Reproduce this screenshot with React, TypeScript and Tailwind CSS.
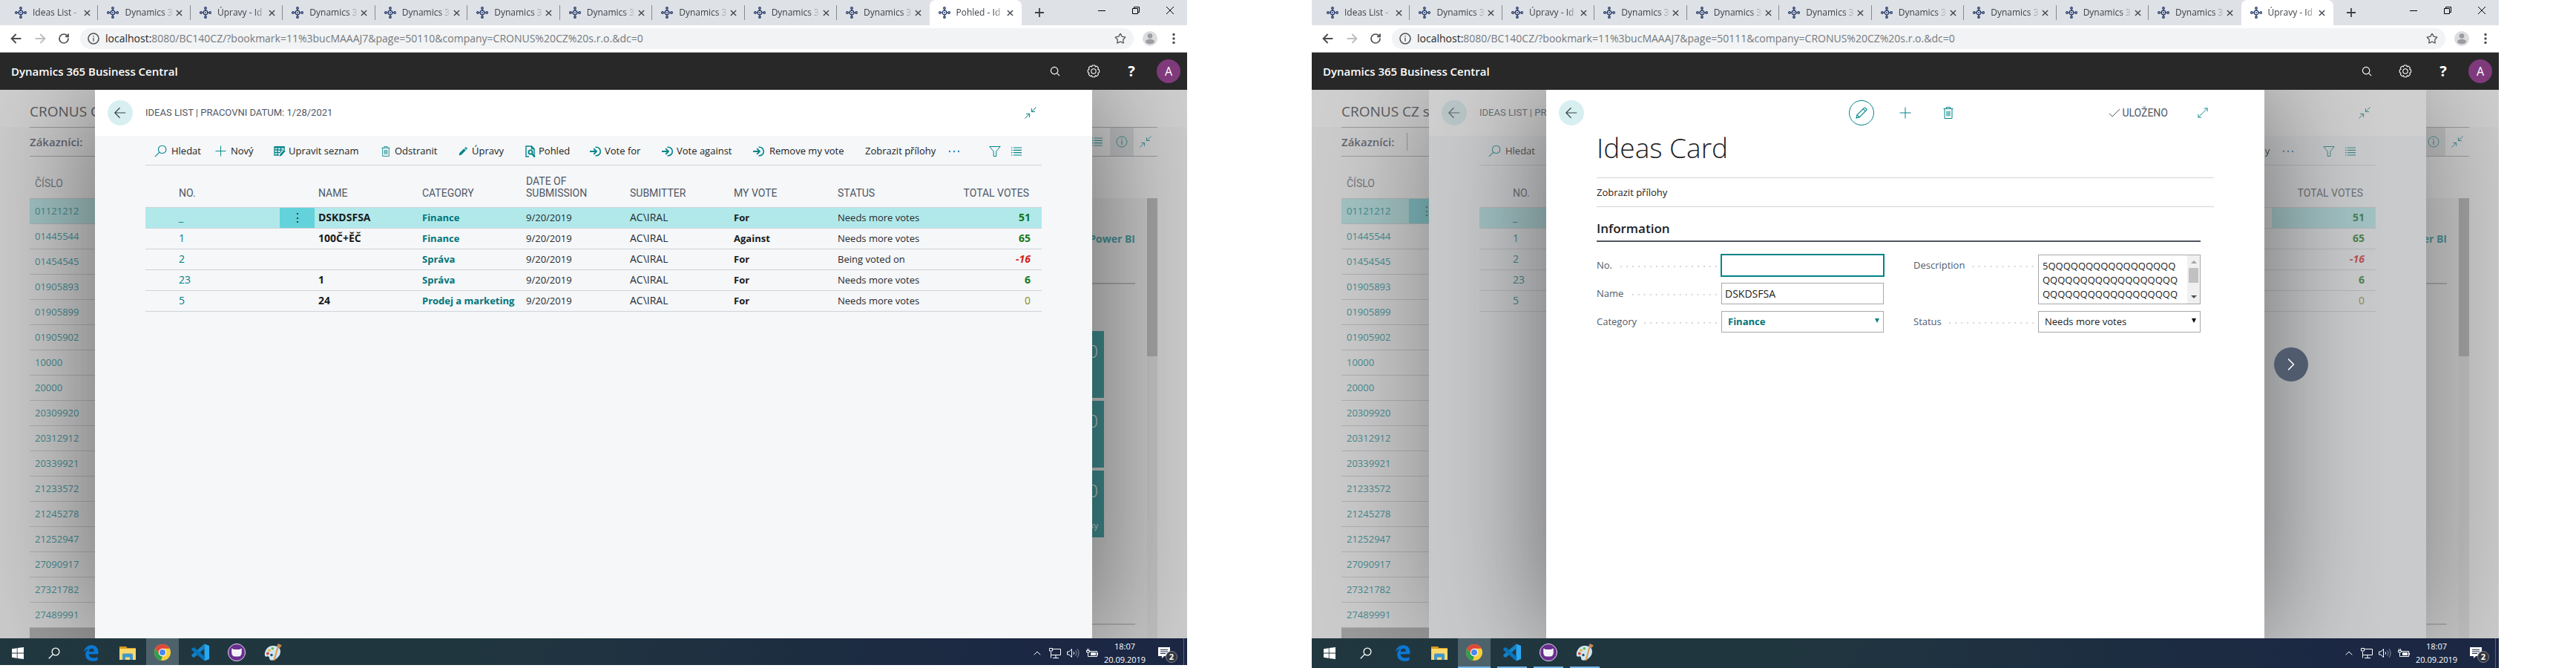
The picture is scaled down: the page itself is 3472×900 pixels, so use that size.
import React from "react";
import { ChevronRight, ChevronUp, RotateCw, Star } from "lucide-react";

type IconProps = { className?: string };

const UI_FONT = "font-['Open_Sans','Noto_Sans',sans-serif]";
const CAPTION_FONT = "font-['Roboto','Noto_Sans',sans-serif]";

/* ---------- icons ---------- */

function Favicon({ className = "" }: IconProps) {
  return (
    <svg viewBox="0 0 16 16" className={className} fill="none" stroke="#1c3263" strokeWidth="1.2" aria-hidden="true">
      <circle cx="8" cy="8" r="2.8" />
      <circle cx="8" cy="8" r="0.9" fill="#1c3263" stroke="none" />
      <circle cx="8" cy="1.900" r="1.300" />
      <circle cx="8" cy="14.100" r="1.300" />
      <circle cx="1.900" cy="8" r="1.300" />
      <circle cx="14.100" cy="8" r="1.300" />
      <path d="M8 3.200v2M8 10.800v2M3.200 8h2M10.800 8h2" />
    </svg>
  );
}

function Arrow({ className = "" }: IconProps) {
  return (
    <svg viewBox="0 0 20 20" className={className} fill="none" stroke="currentColor" aria-hidden="true">
      <path d="M18 10H2.5M9.5 2.5 2 10l7.5 7.5" />
    </svg>
  );
}

function MagnifierLeft({ className = "" }: IconProps) {
  return (
    <svg viewBox="0 0 16 16" className={className} fill="none" stroke="currentColor" aria-hidden="true">
      <circle cx="10" cy="6" r="4.9" />
      <path d="M6.4 9.6 0.8 15.2" />
    </svg>
  );
}

function Magnifier({ className = "" }: IconProps) {
  return (
    <svg viewBox="0 0 16 16" className={className} fill="none" stroke="currentColor" strokeWidth="1.3" aria-hidden="true">
      <circle cx="7" cy="7" r="5.4" />
      <path d="m11 11 4 4" />
    </svg>
  );
}

function PlusIcon({ className = "" }: IconProps) {
  return (
    <svg viewBox="0 0 16 16" className={className} fill="none" stroke="currentColor" aria-hidden="true">
      <path d="M8 0.5v15M0.5 8h15" />
    </svg>
  );
}

function EditListIcon({ className = "" }: IconProps) {
  return (
    <svg viewBox="0 0 16 16" className={className} fill="none" stroke="currentColor" aria-hidden="true">
      <path d="M1 2h13v4M1 2v11h6M1 6h11M1 9.5h8M5 2v11M9.5 2v7" strokeWidth="1.3" />
      <path d="M0.5 1.2h14v2.3h-14z" fill="currentColor" stroke="none" />
      <path d="m7.5 14.8.8-2.8 5.6-6.2 1.8 1.6-5.6 6.4z" fill="currentColor" stroke="none" />
    </svg>
  );
}

function TrashIcon({ className = "" }: IconProps) {
  return (
    <svg viewBox="0 0 14 16" className={className} fill="none" stroke="currentColor" aria-hidden="true">
      <path d="M0.5 2.5h13M4.5 2.5v-2h5v2M2 2.5v13h10v-13M5 5.5v7M7 5.5v7M9 5.5v7" />
    </svg>
  );
}

function PencilSolid({ className = "" }: IconProps) {
  return (
    <svg viewBox="0 0 12 12" className={className} fill="currentColor" aria-hidden="true">
      <path d="M0.6 11.4 1.5 8 7.4 2.2 9.8 4.6 3.9 10.4zM8.2 1.4l.9-.9a.9.9 0 0 1 1.2 0l1.2 1.2a.9.9 0 0 1 0 1.2l-.9.9z" />
    </svg>
  );
}

function PencilOutline({ className = "" }: IconProps) {
  return (
    <svg viewBox="0 0 16 16" className={className} fill="none" stroke="currentColor" strokeWidth="1.1" aria-hidden="true">
      <path d="M1 15 2 10.8 11.6 1.3a1 1 0 0 1 1.4 0l1.7 1.7a1 1 0 0 1 0 1.4L5.2 14zM2 10.8 5.2 14M10.2 2.7l3.1 3.1" />
    </svg>
  );
}

function ViewDocIcon({ className = "" }: IconProps) {
  return (
    <svg viewBox="0 0 14 16" className={className} fill="none" stroke="currentColor" strokeWidth="1.4" aria-hidden="true">
      <path d="M5 15H1V1h7.5L12 4.5V15h-1M8.5 1v3.5H12" />
      <circle cx="7" cy="9" r="2.6" strokeWidth="1.8" />
      <path d="m8.8 11 4 4.5" strokeWidth="2" />
    </svg>
  );
}

function VoteIcon({ className = "" }: IconProps) {
  return (
    <svg viewBox="0 0 16 16" className={className} fill="none" stroke="currentColor" strokeWidth="1.8" aria-hidden="true">
      <path d="M0 8h8.500M5.200 4.200 9 8l-3.800 3.800" />
      <path d="M7.500 2.200h1a5.800 5.800 0 0 1 0 11.600h-1" strokeWidth="1.6" />
    </svg>
  );
}

function FunnelIcon({ className = "" }: IconProps) {
  return (
    <svg viewBox="0 0 16 14" className={className} fill="none" stroke="currentColor" aria-hidden="true">
      <path d="M0.8 0.5h14.4L9.8 7v6.5H6.2V7z" />
    </svg>
  );
}

function ListIcon({ className = "" }: IconProps) {
  return (
    <svg viewBox="0 0 14 12" className={className} fill="none" stroke="currentColor" strokeWidth="1.2" aria-hidden="true">
      <path d="M0 1h1.6M3 1h11M0 4.3h1.6M3 4.3h11M0 7.6h1.6M3 7.6h11M0 11h1.6M3 11h11" />
    </svg>
  );
}

function CollapseIcon({ className = "" }: IconProps) {
  return (
    <svg viewBox="0 0 16 16" className={className} fill="none" stroke="currentColor" aria-hidden="true">
      <path d="M15.6.4 9.4 6.6M9.4 2v4.6H14M.4 15.6l6.2-6.2M2 9.4h4.6V14" />
    </svg>
  );
}

function ExpandIcon({ className = "" }: IconProps) {
  return (
    <svg viewBox="0 0 16 16" className={className} fill="none" stroke="currentColor" aria-hidden="true">
      <path d="M1 15 15 1M10 1h5v5M1 10v5h5" />
    </svg>
  );
}

function InfoIcon({ className = "" }: IconProps) {
  return (
    <svg viewBox="0 0 16 16" className={className} fill="none" stroke="currentColor" aria-hidden="true">
      <circle cx="8" cy="8" r="7" />
      <path d="M8 6.800v5M8 4v1.400" strokeWidth="1.3" />
    </svg>
  );
}

function GearIcon({ className = "" }: IconProps) {
  return (
    <svg viewBox="0 0 18 18" className={className} fill="none" stroke="currentColor" strokeWidth="1.1" aria-hidden="true">
      <path
        strokeLinejoin="round"
        d="M7.300 1h3.400l.6 1.900 1.900-.8 2.300 2.300-.8 1.900 1.900.9v3.400l-1.900.8.8 2-2.300 2.300-1.900-.9-.6 2H7.300l-.8-2-1.900.9-2.300-2.300.8-2L1.300 10.600V7.200l1.800-.9-.8-1.900 2.300-2.300 1.900.8z"
      />
      <circle cx="9" cy="9" r="3.200" />
    </svg>
  );
}

/* ---------- browser chrome ---------- */

function Tab({ title, active, divider }: { title: string; active: boolean; divider: boolean }) {
  return (
    <div
      className={
        "flex h-[34px] min-w-0 flex-1 items-center pl-3 pr-2 " + (active ? "rounded-t-lg bg-white" : "bg-[#dee1e6]")
      }
    >
      <Favicon className="size-4 shrink-0" />
      <span className="ml-2 min-w-0 flex-1 overflow-hidden whitespace-nowrap text-xs text-[#3f4347] [mask-image:linear-gradient(to_right,#000_78%,transparent)]">
        {title}
      </span>
      <button aria-label="Close tab" className="flex h-5 w-4 shrink-0 items-center justify-center">
        <svg viewBox="0 0 10 10" className="size-[9px]" stroke="#45494d" strokeWidth="1.6">
          <path d="m1 1 8 8M9 1 1 9" />
        </svg>
      </button>
      <span className={"-mr-2 ml-1.5 h-5 w-px shrink-0 " + (divider ? "bg-[#868b90]" : "")} />
    </div>
  );
}

function BrowserChrome({ lastTab, pageId }: { lastTab: string; pageId: string }) {
  const dyn = "Dynamics 3";
  const titles = ["Ideas List -", dyn, "Úpravy - Id", dyn, dyn, dyn, dyn, dyn, dyn, dyn, lastTab];
  return (
    <header className="shrink-0">
      <div className="flex h-[34px] bg-[#dee1e6] pl-2">
        {titles.map((t, i) => (
          <Tab key={i} title={t} active={i === titles.length - 1} divider={i < titles.length - 2} />
        ))}
        <div className="flex w-[223px] shrink-0 items-center">
          <button aria-label="New tab" className="ml-3.5 flex size-5 items-center justify-center">
            <svg viewBox="0 0 12 12" className="size-3" stroke="#3c4043" strokeWidth="1.8">
              <path d="M6 0v12M0 6h12" />
            </svg>
          </button>
          <div className="ml-auto flex h-7 items-center gap-9 self-start pr-[18px] text-black">
            <svg viewBox="0 0 10 10" className="size-2.5" stroke="currentColor">
              <path d="M0 5.5h10" />
            </svg>
            <svg viewBox="0 0 10 10" className="size-2.5" fill="none" stroke="currentColor">
              <path d="M.5 2.500h7v7h-7zM2.500 2.500v-2h7v7h-2" />
            </svg>
            <svg viewBox="0 0 10 10" className="size-2.5" stroke="currentColor">
              <path d="m0 0 10 10M10 0 0 10" />
            </svg>
          </div>
        </div>
      </div>
      <div className="flex h-[37px] items-center border-b border-[#b0b6b5] bg-white pr-4">
        <div className="flex w-[108px] shrink-0 items-center gap-4 pl-3.5">
          <Arrow className="size-4 text-[#4a4d51] [stroke-width:2.4]" />
          <Arrow className="size-4 rotate-180 text-[#bcbec1] [stroke-width:2.4]" />
          <RotateCw className="size-4 text-[#4a4d51]" strokeWidth={2.6} />
        </div>
        <div className="flex h-7 min-w-0 flex-1 items-center rounded-full bg-[#f1f3f4] px-2.5">
          <InfoIcon className="size-4 text-[#4f5357] [stroke-width:1.6]" />
          <span className="ml-2 flex-1 truncate text-sm text-[#75797e]">
            <span className="text-[#26282b]">localhost:</span>8080/BC140CZ/?bookmark=11%3bucMAAAJ7&amp;page={pageId}
            &amp;company=CRONUS%20CZ%20s.r.o.&amp;dc=0
          </span>
          <Star className="size-4 text-[#55595e]" strokeWidth={2} />
        </div>
        <svg viewBox="0 0 20 20" className="ml-3 size-5" aria-hidden="true">
          <circle cx="10" cy="10" r="10" fill="#dadcde" />
          <circle cx="10" cy="6.500" r="3.300" fill="#9b9da0" />
          <ellipse cx="10" cy="14" rx="6" ry="3.200" fill="#9b9da0" />
        </svg>
        <svg viewBox="0 0 4 16" className="ml-5 h-4 w-1" fill="#4a4d51" aria-hidden="true">
          <circle cx="2" cy="2.500" r="1.700" />
          <circle cx="2" cy="8" r="1.700" />
          <circle cx="2" cy="13.500" r="1.700" />
        </svg>
      </div>
    </header>
  );
}

function AppBar() {
  return (
    <div className="flex h-[50px] shrink-0 items-center bg-[#282828] pl-[15px] pr-[9px] text-white">
      <span className="text-[15px] font-semibold">Dynamics 365 Business Central</span>
      <div className="ml-auto flex items-center">
        <Magnifier className="size-3.5" />
        <GearIcon className="ml-9 size-[18px]" />
        <span className="ml-9 w-3 text-center text-xl leading-none font-bold">?</span>
        <span className="ml-7 flex size-8 items-center justify-center rounded-full bg-[#7f3a7c] text-base">A</span>
      </div>
    </div>
  );
}

/* ---------- customers page behind the dialogs ---------- */

const customers = [
  "01121212", "01445544", "01454545", "01905893", "01905899", "01905902", "10000", "20000", "20309920",
  "20312912", "20339921", "21233572", "21245278", "21252947", "27090917", "27321782", "27489991",
];

function CustomersPage() {
  return (
    <div className="flex h-full flex-col bg-[#f8f8fa] bg-[linear-gradient(white,white)] bg-[length:100%_50px] bg-no-repeat px-10 text-[#2c3038]">
      <div className="flex h-[51px] shrink-0 items-center border-b border-[#9d9fa5] pt-2 text-[19px]">CRONUS CZ s.r.o.</div>
      <div className="flex h-[39px] shrink-0 items-center border-b border-[#9d9fa5]">
        <span className="text-[15px] font-semibold text-[#42464f]">Zákazníci:</span>
        <span className="ml-[17px] h-6 w-px bg-[#9d9fa5]" />
        <span className="ml-auto flex h-full items-center text-[#008489]">
          <ListIcon className="mr-2.5 h-3 w-3.5" />
          <span className="flex h-full w-8 items-center justify-center bg-[#d9dadc]">
            <InfoIcon className="size-4" />
          </span>
          <CollapseIcon className="mr-2 ml-2 size-4" />
        </span>
      </div>
      <div className="flex min-h-0 flex-1 overflow-hidden">
        <div className="flex min-w-0 flex-1 flex-col">
          <table className="w-full table-fixed border-collapse text-left text-[13px]">
            <thead>
              <tr className="h-14">
                <th className={"w-[91px] pt-4 pl-[7px] text-sm font-normal text-[#5a6069] " + CAPTION_FONT}>ČÍSLO</th>
                <th className="w-12" />
                <th />
              </tr>
            </thead>
            <tbody>
              {customers.map((id, i) => (
                <tr
                  key={id}
                  className={"h-[34px] border-y border-[#c5c7cb] text-[#008489] " + (i === 0 ? "bg-[#aee9ea]" : "")}
                >
                  <td className="pt-0.5 pl-[7px]">{id}</td>
                  <td className={"text-center text-base text-[#204040] " + (i === 0 ? "bg-[#64d2da]" : "")}>
                    {i === 0 ? "⋮" : ""}
                  </td>
                  <td />
                </tr>
              ))}
            </tbody>
          </table>
          <div className="flex-1 bg-[#a2a2a2]" />
        </div>
        <div className="mt-14 flex w-[330px] shrink-0 bg-[#ececec]">
          <div className="flex flex-1 flex-col items-end pr-4">
            <div className="flex h-[116px] w-full items-center justify-end border-b-2 border-[#acacac] text-sm font-bold text-[#008489]">
              <span className="pb-1">Power BI</span>
            </div>
            <div className="mt-[63px] mr-[42px] flex flex-col gap-1">
              {["", "", "Dlužníky"].map((caption, i) => (
                <div key={i} className="flex h-[90px] w-[90px] flex-col items-end bg-[#008489] pr-2 text-white">
                  <span className="text-2xl leading-[54px] font-light">0</span>
                  <span className="mt-3 text-[11px] leading-4">{caption}</span>
                </div>
              ))}
            </div>
            <div className="mt-[116px] h-0.5 w-full bg-[#b5b5b5]" />
          </div>
          <div className="w-3.5 bg-[#e3e3e3]">
            <div className="h-[213px] bg-[#acacac]" />
          </div>
        </div>
      </div>
    </div>
  );
}

/* ---------- ideas list ---------- */

type Idea = { no: string; name: string; category: string; vote: string; status: string; total: string; tone: string };

const ideas: Idea[] = [
  { no: "_", name: "DSKDSFSA", category: "Finance", vote: "For", status: "Needs more votes", total: "51", tone: "font-bold text-[#107420]" },
  { no: "1", name: "100Č+ĚČ", category: "Finance", vote: "Against", status: "Needs more votes", total: "65", tone: "font-bold text-[#187a18]" },
  { no: "2", name: "", category: "Správa", vote: "For", status: "Being voted on", total: "-16", tone: "font-bold italic text-[#d6201f]" },
  { no: "23", name: "1", category: "Správa", vote: "For", status: "Needs more votes", total: "6", tone: "font-bold text-[#187a18]" },
  { no: "5", name: "24", category: "Prodej a marketing", vote: "For", status: "Needs more votes", total: "0", tone: "text-[#8a8a14]" },
];

const headings = ["NAME", "CATEGORY", "DATE OF SUBMISSION", "SUBMITTER", "MY VOTE", "STATUS"];

function Action({ icon, label, className }: { icon?: React.ReactNode; label: string; className: string }) {
  return (
    <button className={"flex shrink-0 items-center whitespace-nowrap " + className}>
      {icon}
      {label}
    </button>
  );
}

function BackButton() {
  return (
    <button aria-label="Back" className="flex size-[34px] shrink-0 items-center justify-center rounded-full bg-[#d8eff1] text-[#33434a]">
      <Arrow className="size-[18px] [stroke-width:1.3]" />
    </button>
  );
}

/* With `covered` set, the middle of the list lies under another dialog and is not painted. */
function IdeasList({ covered = false }: { covered?: boolean }) {
  const teal = "text-[#008489] shrink-0 ";
  const mid = covered ? "invisible " : "";
  return (
    <div className="flex h-full flex-col bg-[#f5f7f9]">
      <div className="flex h-[62px] shrink-0 items-center bg-white pr-[75px] pl-[17px]">
        <BackButton />
        <h2 className={"ml-[17px] text-[13px] text-[#505866] " + CAPTION_FONT}>IDEAS LIST | PRACOVNI DATUM: 1/28/2021</h2>
        <button aria-label="Collapse" className="ml-auto text-[#008489]">
          <CollapseIcon className="size-4" />
        </button>
      </div>
      <div className="mr-17 ml-17 flex h-10 shrink-0 items-center border-b border-[#cfd3d7] pt-0.5 pl-3 text-[13px] text-[#212121]">
        <Action className="w-[82px] gap-1.5" icon={<MagnifierLeft className={teal + "size-[17px]"} />} label="Hledat" />
        <Action className={mid + "w-[79px] gap-1.5"} icon={<PlusIcon className={teal + "size-[15px]"} />} label="Nový" />
        <Action className={mid + "w-[145px] gap-1"} icon={<EditListIcon className={teal + "size-4"} />} label="Upravit seznam" />
        <Action className={mid + "w-[104px] gap-1.5"} icon={<TrashIcon className={teal + "h-4 w-3"} />} label="Odstranit" />
        <Action className={mid + "w-[90px] gap-1.5"} icon={<PencilSolid className={teal + "size-3"} />} label="Úpravy" />
        <Action className={mid + "w-[87px] gap-1"} icon={<ViewDocIcon className={teal + "h-4 w-3.5"} />} label="Pohled" />
        <Action className={mid + "w-[97px] gap-1"} icon={<VoteIcon className={teal + "size-4"} />} label="Vote for" />
        <Action className={mid + "w-[123px] gap-1"} icon={<VoteIcon className={teal + "size-4"} />} label="Vote against" />
        <Action className={mid + "w-[151px] gap-1.5"} icon={<VoteIcon className={teal + "size-4"} />} label="Remove my vote" />
        <Action className="w-[112px]" label="Zobrazit přílohy" />
        <button aria-label="More" className="shrink-0 text-[#2b88c8]">
          <svg viewBox="0 0 16 4" className="h-1 w-4" fill="currentColor">
            <circle cx="2" cy="2" r="1.200" />
            <circle cx="8" cy="2" r="1.200" />
            <circle cx="14" cy="2" r="1.200" />
          </svg>
        </button>
        <button aria-label="Filter" className="ml-auto shrink-0">
          <FunnelIcon className={teal + "h-3.5 w-4"} />
        </button>
        <button aria-label="List view" className="mr-[27px] ml-3.5 shrink-0">
          <ListIcon className={teal + "h-3 w-3.5"} />
        </button>
      </div>
      <div className="mx-17">
        <table className="w-full table-fixed border-collapse text-left text-[13px] text-[#26292d]">
          <thead>
            <tr className={"h-14 align-bottom text-sm leading-4 text-[#505866] " + CAPTION_FONT}>
              <th className="pb-[11px] pl-[45px] font-normal">NO.</th>
              <th className="w-[47px]" />
              {headings.map((h) => (
                <th key={h} className={mid + "w-[140px] pb-[11px] pl-[5px] font-normal"}>
                  {h}
                </th>
              ))}
              <th className="w-[140px] pr-[17px] pb-[11px] text-right font-normal">TOTAL VOTES</th>
            </tr>
          </thead>
          <tbody>
            {ideas.map((r, i) => (
              <tr key={r.no} className={"h-7 border-y border-[#cfd3d7] whitespace-nowrap " + (i === 0 ? "bg-[#b1e9eb]" : "")}>
                <td className="pl-[45px] text-sm leading-5 text-[#007f85]">{r.no}</td>
                <td className={mid + "text-center text-base leading-5 " + (i === 0 ? "bg-[#64d2da]" : "")}>{i === 0 ? "⋮" : ""}</td>
                <td className={mid + "pl-[5px] text-sm leading-5 font-bold text-[#1a1a1a]"}>{r.name}</td>
                <td className={mid + "pl-[5px] leading-5 font-bold text-[#00757a]"}>{r.category}</td>
                <td className={mid + "pl-[5px] leading-5"}>9/20/2019</td>
                <td className={mid + "pl-[5px] text-sm leading-5"}>AC\IRAL</td>
                <td className={mid + "pl-[5px] leading-5 font-bold text-[#1a1a1a]"}>{r.vote}</td>
                <td className={mid + "pl-[5px] leading-5"}>{r.status}</td>
                <td className={"pr-[15px] text-right text-sm leading-5 " + r.tone}>{r.total}</td>
              </tr>
            ))}
          </tbody>
        </table>
      </div>
    </div>
  );
}

/* ---------- ideas card ---------- */

function Leader() {
  return (
    <span className="mt-0.5 mr-1.5 ml-2.5 h-0.5 flex-1 bg-[linear-gradient(to_left,#d3d6d9_2px,transparent_2px)] bg-[length:8px_2px] bg-right" />
  );
}

function Field({ id, label, children }: { id: string; label: string; children: React.ReactNode }) {
  return (
    <div className="flex items-start">
      <label htmlFor={id} className="flex h-[29px] w-[168px] shrink-0 items-center text-[13px] text-[#505c6d]">
        {label}
        <Leader />
      </label>
      {children}
    </div>
  );
}

function Caret({ className = "" }: IconProps) {
  return (
    <svg viewBox="0 0 6 6" className={"pointer-events-none absolute top-2.5 right-1.5 size-1.5 " + className} fill="currentColor" aria-hidden="true">
      <path d="M0 0h6L3 6z" />
    </svg>
  );
}

const box = "h-[29px] w-full min-w-0 border bg-white ";

function IdeasCard() {
  const q = "Q".repeat(17);
  return (
    <div className="flex h-full flex-col bg-white">
      <div className="flex h-[62px] shrink-0 items-center pr-[76px] pl-[17px] text-[#008489]">
        <BackButton />
        <button aria-label="Edit" className="ml-[357px] flex size-[34px] items-center justify-center rounded-full border border-[#008489]">
          <PencilOutline className="size-4" />
        </button>
        <button aria-label="New" className="ml-[34px]">
          <PlusIcon className="size-4" />
        </button>
        <button aria-label="Delete" className="ml-[43px]">
          <TrashIcon className="h-4 w-3.5" />
        </button>
        <span className={"ml-auto flex items-center gap-0.5 text-sm text-[#505866] " + CAPTION_FONT}>
          <svg viewBox="0 0 16 12" className="h-3 w-4" fill="none" stroke="currentColor">
            <path d="m1 7 4 4L15 1" />
          </svg>
          ULOŽENO
        </span>
        <button aria-label="Expand" className="ml-10">
          <ExpandIcon className="size-3.5" />
        </button>
      </div>
      <div className="px-17">
        <h1 className="h-14 text-[37px] leading-8 font-light text-[#212121]">Ideas Card</h1>
        <div className="flex h-10 items-center border-y border-[#d2d4d6] text-[13px] text-[#212121]">
          <button className="pt-px">Zobrazit přílohy</button>
        </div>
        <section className="mr-[18px]">
          <h2 className="flex h-[47px] items-end border-b-2 border-[#50565f] pb-1 text-[17px] font-semibold text-[#212121]">
            Information
          </h2>
          <div className="mt-[17px] grid grid-cols-2 gap-x-10">
            <div className="flex flex-col gap-[9px]">
              <Field id="no" label="No.">
                <input id="no" className={box + "border-[#008489] px-1.5 text-sm outline outline-[#008489]"} />
              </Field>
              <Field id="name" label="Name">
                <input id="name" defaultValue="DSKDSFSA" className={box + "border-[#a6a8ab] px-1 text-sm text-[#212121]"} />
              </Field>
              <Field id="category" label="Category">
                <span className="relative flex-1">
                  <select id="category" className={box + "appearance-none border-[#a6a8ab] px-2 text-[13px] font-bold text-[#00757a]"}>
                    <option>Finance</option>
                  </select>
                  <Caret className="text-[#008489]" />
                </span>
              </Field>
            </div>
            <div className="flex flex-col gap-[9px]">
              <Field id="description" label="Description">
                <span className="flex h-[67px] min-w-0 flex-1 border border-[#a6a8ab]">
                  <textarea
                    id="description"
                    wrap="off"
                    defaultValue={`5${q}\nQ${q}\nQ${q}`}
                    className="h-full min-w-0 flex-1 resize-none overflow-hidden bg-transparent pt-[5px] pl-[5px] text-[13px] leading-[19px] text-[#212121] outline-none"
                  />
                  <span className="flex w-[17px] flex-col items-center bg-[#f0f0f0] py-[7px] text-[#505050]">
                    <svg viewBox="0 0 8 4" className="h-1 w-2" fill="#a3a3a3">
                      <path d="M0 4h8L4 0z" />
                    </svg>
                    <span className="mt-1.5 h-5 w-[13px] bg-[#c1c1c1]" />
                    <svg viewBox="0 0 8 4" className="mt-auto h-1 w-2" fill="currentColor">
                      <path d="M0 0h8L4 4z" />
                    </svg>
                  </span>
                </span>
              </Field>
              <Field id="status" label="Status">
                <span className="relative flex-1">
                  <select id="status" className={box + "appearance-none border-[#a6a8ab] px-2 text-[13px] text-[#212121]"}>
                    <option>Needs more votes</option>
                  </select>
                  <Caret className="text-black" />
                </span>
              </Field>
            </div>
          </div>
        </section>
      </div>
    </div>
  );
}

/* ---------- taskbar ---------- */

function Taskbar({ windowsOpen }: { windowsOpen: boolean }) {
  const mark = windowsOpen ? "border-b-2 border-[#76b9ed] " : "border-b-2 border-transparent ";
  const app = "mr-1 ml-[5px] flex h-10 w-10 items-center justify-center " + mark;
  return (
    <footer className="flex h-10 shrink-0 items-center bg-[linear-gradient(to_right,#21373f,#20363f_40%,#1b2743_88%)] text-white">
      <button aria-label="Start" className="flex w-12 justify-center">
        <svg viewBox="0 0 16 16" className="size-4" fill="#fff">
          <path d="M0 2.200 6.800 1.200v6.400H0zM7.600 1.100 16 0v7.600H7.600zM0 8.400h6.800v6.400L0 13.800zM7.600 8.400H16V16l-8.400-1.100z" />
        </svg>
      </button>
      <button aria-label="Search" className="flex w-[50px] justify-center">
        <MagnifierLeft className="size-4 [stroke-width:1.3]" />
      </button>
      <button aria-label="Edge" className="flex w-[49px] justify-center">
        <svg viewBox="0 0 20 22" className="h-[22px] w-5" fill="#0b78d4">
          <path d="M0 9.500C1 3.500 5.500.2 10.500.2c5.700 0 9 4 9 9.400v2.600H6.600c.2 3.700 3 5.300 6.200 5.300 2.200 0 4-.6 5.700-1.600v4.300c-1.900 1-4.200 1.500-6.600 1.500-5.800 0-9.700-3.400-9.700-8.900 0-3.400 1.700-6.300 4.700-7.600C3.800 5.800 1.500 7.200 0 9.500zM6.700 8.900h7.200c0-2.600-1.300-4.100-3.500-4.100-2.100 0-3.400 1.600-3.700 4.100z" />
        </svg>
      </button>
      <button aria-label="Explorer" className="flex w-[49px] justify-center">
        <svg viewBox="0 0 22 18" className="h-[18px] w-[22px]">
          <path d="M0 0h9l1.500 2H22v3H0z" fill="#d99a1c" />
          <path d="M0 3h22v15H0z" fill="#fbd86b" />
          <path d="M4 18V11a1.500 1.500 0 0 1 1.500-1.500h11A1.500 1.500 0 0 1 18 11v7h-4v-3.500H8V18z" fill="#3f97cf" />
        </svg>
      </button>
      <button
        aria-label="Chrome"
        className={"ml-px mr-1 flex h-10 w-11 items-center justify-center bg-[#4e626b] " + mark}
      >
        <svg viewBox="0 0 22 22" className="size-[22px]">
          <circle cx="11" cy="11" r="11" fill="#f9cf3e" />
          <path d="M11 0a11 11 0 0 1 9.600 5.700H11L6.400 13.700 1.600 5.400A11 11 0 0 1 11 0z" fill="#e0473a" />
          <path d="M1.600 5.400 6.400 13.700 11 16.200 9 21.800A11 11 0 0 1 1.600 5.400z" fill="#2da04e" />
          <circle cx="11" cy="11" r="5.200" fill="#fff" />
          <circle cx="11" cy="11" r="4" fill="#4a86ee" />
        </svg>
      </button>
      <button aria-label="Visual Studio Code" className={app}>
        <svg viewBox="0 0 24 24" className="size-6">
          <path d="M17.500.5 24 3v18l-6.500 2.500z" fill="#2aa8f2" />
          <path d="M17.500.5 18.500 6 3.500 19 .3 17.200v-2z" fill="#1383c8" />
          <path d="M17.500 23.500 18.500 18 3.500 5 .3 6.800v2z" fill="#0a74bd" />
        </svg>
      </button>
      <button aria-label="GitHub Desktop" className={app}>
        <svg viewBox="0 0 24 24" className="size-6">
          <circle cx="12" cy="12" r="11.500" fill="#6a2f8f" stroke="#e7dcf0" strokeWidth="1" />
          <path d="M5.500 6.500 8.500 8h7l3-1.500c.5 2 .4 3 .2 4 .6 3.500-1.200 7-4 7h-5.400c-2.800 0-4.600-3.500-4-7-.2-1-.3-2 .2-4z" fill="#f5f3f7" />
        </svg>
      </button>
      <button aria-label="Paint" className={app}>
        <svg viewBox="0 0 24 24" className="size-6">
          <path d="M11.500 3C5.500 3 1 8.500.8 14.500c-.1 3 1.700 3.700 3.200 3 1.800-.8 3 .3 3 2.300.1 2.700 3 3.400 6 2.400 5-1.700 9-6.500 9-11.500C22 5.500 17.500 3 11.500 3z" fill="#cfe6f3" />
          <circle cx="4.800" cy="13.500" r="1.900" fill="#e0483b" />
          <circle cx="7" cy="9.300" r="1.800" fill="#efb02d" />
          <circle cx="11.300" cy="6.800" r="1.800" fill="#69b84a" />
          <circle cx="10" cy="15.500" r="1.700" fill="#24506b" />
          <path d="m20 3.500-5.500 19.500-2-.5L18 3z" fill="#e09a4d" />
          <path d="m17.500 4 1-4 5.500 2.500-3 3.500z" fill="#c98a55" />
        </svg>
      </button>
      <div className="ml-auto flex h-full items-center">
        <ChevronUp className="size-4" strokeWidth={1.5} />
        <svg viewBox="0 0 16 14" className="ml-2 h-3.5 w-4" fill="none" stroke="#fff">
          <path d="M4.500 1.500h11v8H2.500V5M.5.5h4V4h-4zM9 9.500V13M5 13.500h8M2.500 9.500v4" />
        </svg>
        <svg viewBox="0 0 18 14" className="ml-2 h-3.5 w-[18px]" fill="none" stroke="#fff">
          <path d="M.5 5H3l3.500-3.500v11L3 9H.5zM9 5.200a3 3 0 0 1 0 3.600" />
          <path d="M11.500 3.200a6 6 0 0 1 0 7.600M14 1.200a9 9 0 0 1 0 11.600" stroke="#8b93a4" />
        </svg>
        <svg viewBox="0 0 16 12" className="ml-2 h-3 w-4" fill="none" stroke="#fff">
          <path d="M5 3.500h9.500v7H4.500M15.500 5.500v3M1.500 0v2M3.500 0v2M.5 2.500h4v2.300h-4zM2.500 5v5.500h2" />
          <path d="M6 5h7v4H6z" fill="#fff" stroke="none" />
        </svg>
        <div className="ml-2 w-14 text-center text-[11px] leading-[18px]">
          <div>18:07</div>
          <div>20.09.2019</div>
        </div>
        <button aria-label="Notifications" className="relative ml-[17px] size-[26px]">
          <svg viewBox="0 0 16 16" className="size-4" fill="#fff">
            <path d="M0 0h16v12H8l-3 3v-3H0z" />
            <path d="M3 3.500h10M3 6h10M3 8.500h7" stroke="#1b2743" />
          </svg>
          <span className="absolute right-0 bottom-0 flex size-4 items-center justify-center rounded-full border border-[#7d828b] bg-[#33363d] text-[11px] font-bold">
            2
          </span>
        </button>
        <span className="ml-2 h-full w-px bg-[#5b6679]" />
        <span className="w-1" />
      </div>
    </footer>
  );
}

/* ---------- windows ---------- */

const SHADOW = "shadow-[0_0_150px_rgba(0,0,0,0.5)]";

function Scrim() {
  return <div className="absolute inset-0 bg-[rgba(147,147,147,0.43)]" />;
}

function Screen({
  lastTab,
  pageId,
  windowsOpen,
  children,
}: {
  lastTab: string;
  pageId: string;
  windowsOpen: boolean;
  children: React.ReactNode;
}) {
  return (
    <section className="flex h-full min-w-0 flex-col overflow-hidden">
      <BrowserChrome lastTab={lastTab} pageId={pageId} />
      <AppBar />
      <main className="relative h-[739px] shrink-0 overflow-hidden">
        <CustomersPage />
        {children}
      </main>
      <Taskbar windowsOpen={windowsOpen} />
    </section>
  );
}

export default function App() {
  return (
    <div className={"grid h-screen grid-cols-2 gap-x-[168px] overflow-hidden bg-white pr-[104px] " + UI_FONT}>
      <div className="min-h-0 min-w-0 overflow-hidden border-b-4 border-white">
        <Screen lastTab="Pohled - Id" pageId="50110" windowsOpen={false}>
          <Scrim />
          <div className={"absolute inset-y-0 right-32 left-32 " + SHADOW}>
            <IdeasList />
          </div>
        </Screen>
      </div>
      <Screen lastTab="Úpravy - Id" pageId="50111" windowsOpen={true}>
        <div className={"absolute inset-y-0 right-[98px] left-[158px] " + SHADOW}>
          <IdeasList covered />
        </div>
        <Scrim />
        <div className={"absolute inset-y-0 right-[316px] left-[316px] " + SHADOW}>
          <IdeasCard />
        </div>
        <button
          aria-label="Next"
          className="absolute top-[347px] right-[257px] flex size-[46px] items-center justify-center rounded-full bg-[#505c6d] text-white"
        >
          <ChevronRight className="size-7" strokeWidth={1.3} />
        </button>
      </Screen>
    </div>
  );
}
